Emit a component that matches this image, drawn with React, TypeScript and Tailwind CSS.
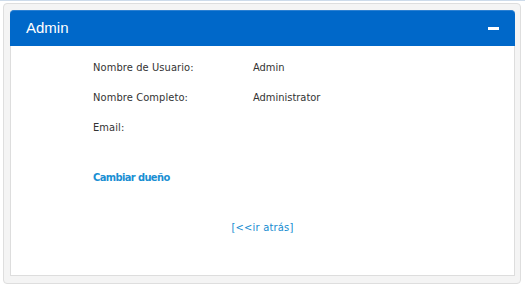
import React from 'react';

const rows = [
  { label: 'Nombre de Usuario:', value: 'Admin' },
  { label: 'Nombre Completo:', value: 'Administrator' },
  { label: 'Email:', value: '' },
];

export default function App() {
  return (
    <div className="w-[525px] h-[287px] bg-white overflow-hidden">
      <div className="h-[1px] bg-[#cddbea]" />
      <div className="ml-[3px] mt-[2px] w-[518px] h-[281px] rounded-[4px] border border-[#dedede] bg-[#f4f4f4] pt-[6px] pl-[6px] pr-[5px]">
        <div className="h-[36px] rounded-t-[4px] bg-[#0068c9] border-t border-[#2b80d2] flex items-center justify-between pl-[16px] pr-[16px]">
          <span className="text-white text-[15px] font-['Liberation_Sans',Arial,sans-serif]">Admin</span>
          <span className="block w-[11px] h-[3px] bg-white" />
        </div>
        <div className="h-[230px] bg-white border border-t-0 border-[#dddddd] font-['DejaVu_Sans_Condensed','DejaVu_Sans',Tahoma,sans-serif] text-[11px] leading-[15px] text-[#333333] pt-[14px] pl-[82px]">
          <div className="flex flex-col gap-[15px]">
            {rows.map((r) => (
              <div key={r.label} className="flex">
                <span className="w-[160px] tracking-[0.1px]">{r.label}</span>
                <span>{r.value}</span>
              </div>
            ))}
          </div>
          <a className="block mt-[35px] font-bold tracking-[-0.6px] text-[#1a8fd3] cursor-pointer">Cambiar dueño</a>
          <div className="mt-[35px] -ml-[82px] text-center text-[#148bd0]">
            <a className="cursor-pointer tracking-[0.2px]">[&lt;&lt;ir atrás]</a>
          </div>
        </div>
      </div>
    </div>
  );
}
